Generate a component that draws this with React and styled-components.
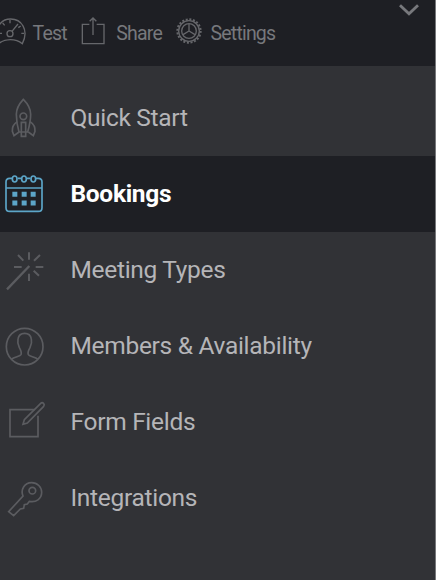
import React from "react";
import styled, { createGlobalStyle } from "styled-components";

const menu = [
  { label: "Quick Start", Icon: RocketIcon },
  { label: "Bookings", Icon: CalendarIcon, active: true },
  { label: "Meeting Types", Icon: WandIcon },
  { label: "Members & Availability", Icon: UserIcon },
  { label: "Form Fields", Icon: EditIcon },
  { label: "Integrations", Icon: KeyIcon },
];

function App() {
  return (
    <>
      <GlobalStyle />
      <Sidebar>
        <Toolbar>
          <ToolButton $gap={6.5}>
            <GaugeIcon />
            Test
          </ToolButton>
          <ToolButton $gap={10}>
            <ShareIcon />
            Share
          </ToolButton>
          <ToolButton $gap={7}>
            <GearIcon />
            Settings
          </ToolButton>
          <Chevron viewBox="0 0 24 16">
            <path d="M4 5.2l9 8.6 9-8.6" />
          </Chevron>
        </Toolbar>
        <Menu>
          {menu.map(({ label, Icon, active }) => (
            <MenuItem key={label} $active={active}>
              <Icon />
              <Label $active={active}>{label}</Label>
            </MenuItem>
          ))}
        </Menu>
      </Sidebar>
    </>
  );
}

export default App;

function GaugeIcon() {
  return (
    <ToolIcon viewBox="0 0 78 84" $width={26}>
      <path d="M-4 75C-20 42 0 9 32 9s56 32 35 74c-20-16-52-16-71 0" />
      <circle cx="30" cy="53" r="9" />
      <path d="M36 46l18-22M30 12v10M8 21l6 7M62 30l-7 5M72 52h-8M-2 52h8" />
    </ToolIcon>
  );
}

function ShareIcon() {
  return (
    <ToolIcon viewBox="0 0 78 84" $width={26}>
      <path d="M28 25H7v58h65V25H50M39 57V6M29 16L39 6l10 10" />
    </ToolIcon>
  );
}

function GearIcon() {
  return (
    <ToolIcon viewBox="0 0 84 84" $width={28}>
      <circle cx="42" cy="45" r="35" strokeWidth="6" strokeDasharray="6 5" />
      <circle cx="42" cy="45" r="31" />
      <circle cx="42" cy="45" r="22" />
      <path d="M42 45V24M42 45l18 11M42 45L24 56" />
    </ToolIcon>
  );
}

function RocketIcon() {
  return (
    <MenuIcon viewBox="0 0 144 168">
      <path d="M70 28c-14 15-21 29-21 45 0 18 3 36 8 53h26c5-17 9-35 9-53 0-16-7-30-22-45z" />
      <circle cx="70" cy="79" r="10" />
      <path d="M52 95c-11 7-16 17-15 29l5 13 15-11M90 95c11 7 16 17 15 29l-5 13-15-11" />
      <path d="M64 97h13v42H64z" />
    </MenuIcon>
  );
}

function CalendarIcon() {
  return (
    <MenuIcon viewBox="0 0 144 168" $active>
      <path d="M36 37h-7q-11 0-11 11v77q0 11 11 11h86q11 0 11-11V48q0-11-11-11h-7M53 37h10M81 37h10M18 66h108" />
      <ellipse cx="44" cy="39" rx="7" ry="9" />
      <ellipse cx="72" cy="39" rx="7" ry="9" />
      <ellipse cx="100" cy="39" rx="7" ry="9" />
      <path
        d="M37 85h15M65 85h15M92 85h15M37 111h15M65 111h15M92 111h15"
        strokeWidth="15"
      />
    </MenuIcon>
  );
}

function WandIcon() {
  return (
    <MenuIcon viewBox="0 0 144 168">
      <path d="M21 142L88 72" strokeWidth="7" />
      <path
        d="M87 31v22M87 95v22M42 75h23M107 75h23M54 39l16 17M120 39l-18 17M101 86l16 15"
        strokeWidth="6"
      />
    </MenuIcon>
  );
}

function UserIcon() {
  return (
    <MenuIcon viewBox="0 0 144 168">
      <circle cx="74" cy="86" r="55" />
      <path d="M34 124c9-8 26-8 29-14 3-7-1-14-5-21-4-8-6-17-4-26 2-12 10-17 20-17s18 5 20 17c2 9 0 18-4 26-4 7-8 14-5 21 3 6 20 6 29 14" />
    </MenuIcon>
  );
}

function EditIcon() {
  return (
    <MenuIcon viewBox="0 0 144 168">
      <path d="M104 47H30v81h84V65" />
      <path d="M69 91l4-14 49-49c6-5 14 3 9 9L82 87z" />
    </MenuIcon>
  );
}

function KeyIcon() {
  return (
    <MenuIcon viewBox="0 0 144 168">
      <path d="M69 78c-8-19 4-40 26-40 17 0 30 13 30 29 0 20-17 31-37 27l-6 8-9 2-2 11-10 2-20 20-15-12z" />
      <circle cx="97" cy="62" r="10" />
    </MenuIcon>
  );
}

const GlobalStyle = createGlobalStyle`
  * {
    box-sizing: border-box;
  }

  body {
    margin: 0;
    background: #313236;
    font-family: Roboto, sans-serif;
  }
`;

const Sidebar = styled.div`
  width: 436px;
  height: 580px;
  overflow: hidden;
  background: #313236;
  border-right: 1px solid #77787b;
`;

const Toolbar = styled.div`
  display: flex;
  height: 66px;
  padding-top: 16px;
  background: #1e1f24;
`;

const ToolButton = styled.div`
  display: flex;
  gap: ${({ $gap }) => $gap}px;
  height: 36px;
  margin-right: 13.5px;
  color: #77787c;
  font-size: 19.5px;
  letter-spacing: -0.8px;
  line-height: 36px;
  white-space: nowrap;
`;

const ToolIcon = styled.svg`
  flex: none;
  width: ${({ $width }) => $width}px;
  height: 28px;
  overflow: visible;
  fill: none;
  stroke: #66676b;
  stroke-width: 4;
`;

const Chevron = styled.svg`
  width: 24px;
  height: 16px;
  margin: -16px 15px 0 auto;
  fill: none;
  stroke: #77787c;
  stroke-width: 2.8;
`;

const Menu = styled.div`
  padding-top: 14px;
`;

const MenuItem = styled.div`
  display: flex;
  align-items: center;
  height: 76px;
  gap: 22.5px;
  background: ${({ $active }) => ($active ? "#1e1f24" : "transparent")};
`;

const MenuIcon = styled.svg`
  flex: none;
  width: 48px;
  height: 56px;
  fill: none;
  stroke: ${({ $active }) => ($active ? "#5ca5c8" : "#5b5c60")};
  stroke-width: 5;
`;

const Label = styled.span`
  color: ${({ $active }) => ($active ? "#fff" : "#b5b5b8")};
  font-size: 24.5px;
  font-weight: ${({ $active }) => ($active ? 700 : 400)};
  letter-spacing: -0.3px;
  line-height: 30px;
  white-space: nowrap;
`;
